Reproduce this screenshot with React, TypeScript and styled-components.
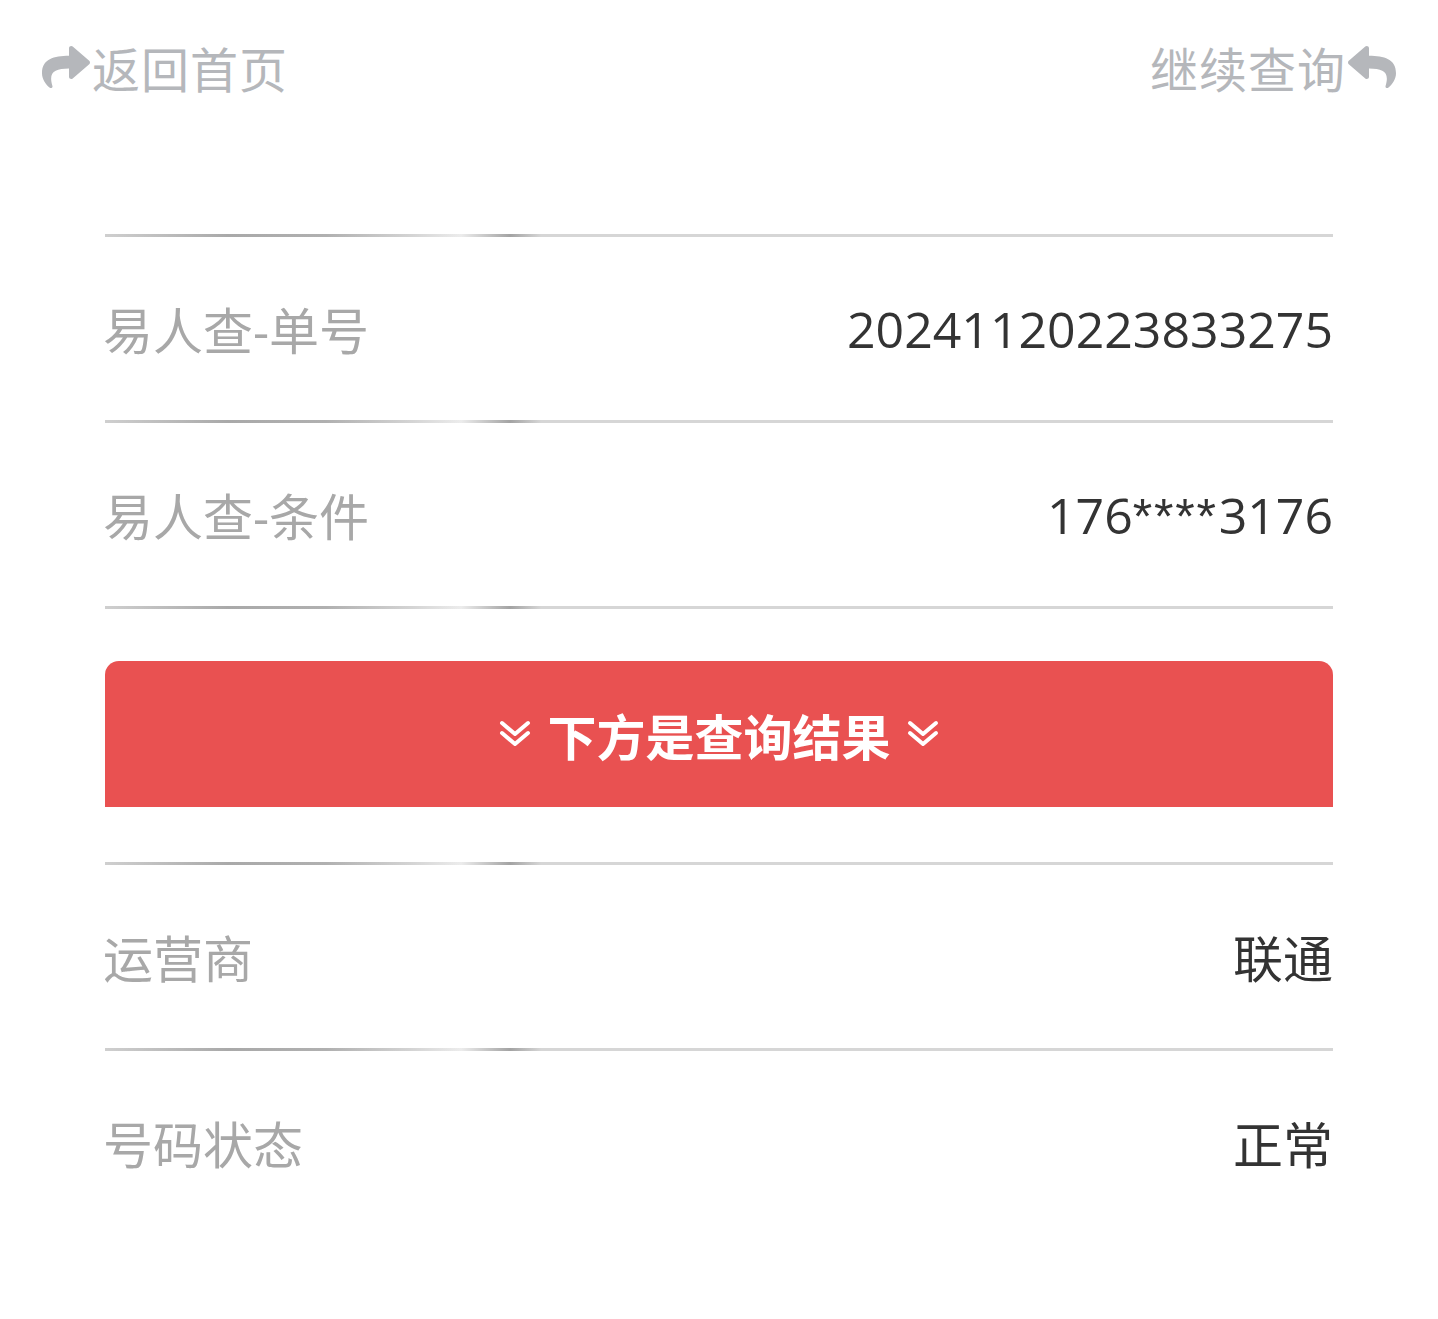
import styled, { createGlobalStyle } from 'styled-components';
import { FaShare, FaReply } from 'react-icons/fa';

const GlobalStyle = createGlobalStyle`
    body {
        margin: 0;
        background: #fff;
        font-family: "Open Sans", "Noto Sans CJK SC", sans-serif;
    }
`;

const Page = styled.div`
    width: 100%;
`;

const TopBar = styled.div`
    display: flex;
    justify-content: space-between;
    align-items: flex-start;
    height: 194px;
    padding: 37px 42px 0;
    box-sizing: border-box;
`;

const NavLink = styled.a`
    display: flex;
    align-items: center;
    gap: 2px;
    color: #b5b7bb;
    font-size: 48px;
    line-height: 60px;
    letter-spacing: 1px;
    text-decoration: none;
    font-family: "Noto Sans CJK SC", sans-serif;
    svg {
        font-size: 48px;
        color: #b5b7bb;
    }
`;

const Content = styled.div`
    padding: 40px 105px 0;
`;

const Divider = styled.div`
    height: 3px;
    background: linear-gradient(
        to right,
        #cfcfcf 0%,
        #a9a9a9 10%,
        #b0b0b0 18%,
        #d4d4d4 25%,
        #ececec 29%,
        #a3a3a3 33%,
        #d6d6d6 35.5%,
        #d6d6d6 100%
    );
`;

const Row = styled.div`
    display: flex;
    justify-content: space-between;
    align-items: center;
    height: 183px;
    font-size: 50px;
`;

const Label = styled.span`
    color: #a8a8a8;
    margin-left: -2px;
`;

const Value = styled.span`
    color: #333;
`;

const Mask = styled.span`
    font-family: "Liberation Sans", sans-serif;
    letter-spacing: 1.75px;
    margin-right: 1px;
`;

const ResultBanner = styled.div`
    margin: 52px 0 55px;
    height: 146px;
    background: #e95151;
    border-radius: 14px 14px 0 0;
    display: flex;
    align-items: center;
    justify-content: center;
    gap: 16px;
    color: #fff;
    font-family: "Noto Sans CJK SC", sans-serif;
    font-weight: 700;
    font-size: 49px;
`;

const Chevrons = () => (
    <svg width="32" height="28" viewBox="0 0 32 28" fill="none" stroke="#fff" strokeWidth="4" strokeLinecap="round" strokeLinejoin="round">
        <polyline points="3,3 16,14 29,3" />
        <polyline points="3,13 16,24 29,13" />
    </svg>
);

function renderValue(v: string) {
    return v.split(/(\*+)/).map((part, i) =>
        part.startsWith('*') ? <Mask key={i}>{part}</Mask> : part
    );
}

const rows1 = [
    { label: '易人查-单号', value: '20241120223833275' },
    { label: '易人查-条件', value: '176****3176' },
];

const rows2 = [
    { label: '运营商', value: '联通' },
    { label: '号码状态', value: '正常' },
];

export default function App() {
    return (
        <Page>
            <GlobalStyle />
            <TopBar>
                <NavLink href="#">
                    <FaShare />
                    返回首页
                </NavLink>
                <NavLink href="#">
                    继续查询
                    <FaReply />
                </NavLink>
            </TopBar>
            <Content>
                {rows1.map((r) => (
                    <div key={r.label}>
                        <Divider />
                        <Row>
                            <Label>{r.label}</Label>
                            <Value>{renderValue(r.value)}</Value>
                        </Row>
                    </div>
                ))}
                <Divider />
                <ResultBanner>
                    <Chevrons />
                    下方是查询结果
                    <Chevrons />
                </ResultBanner>
                {rows2.map((r) => (
                    <div key={r.label}>
                        <Divider />
                        <Row>
                            <Label>{r.label}</Label>
                            <Value>{renderValue(r.value)}</Value>
                        </Row>
                    </div>
                ))}
            </Content>
        </Page>
    );
}
